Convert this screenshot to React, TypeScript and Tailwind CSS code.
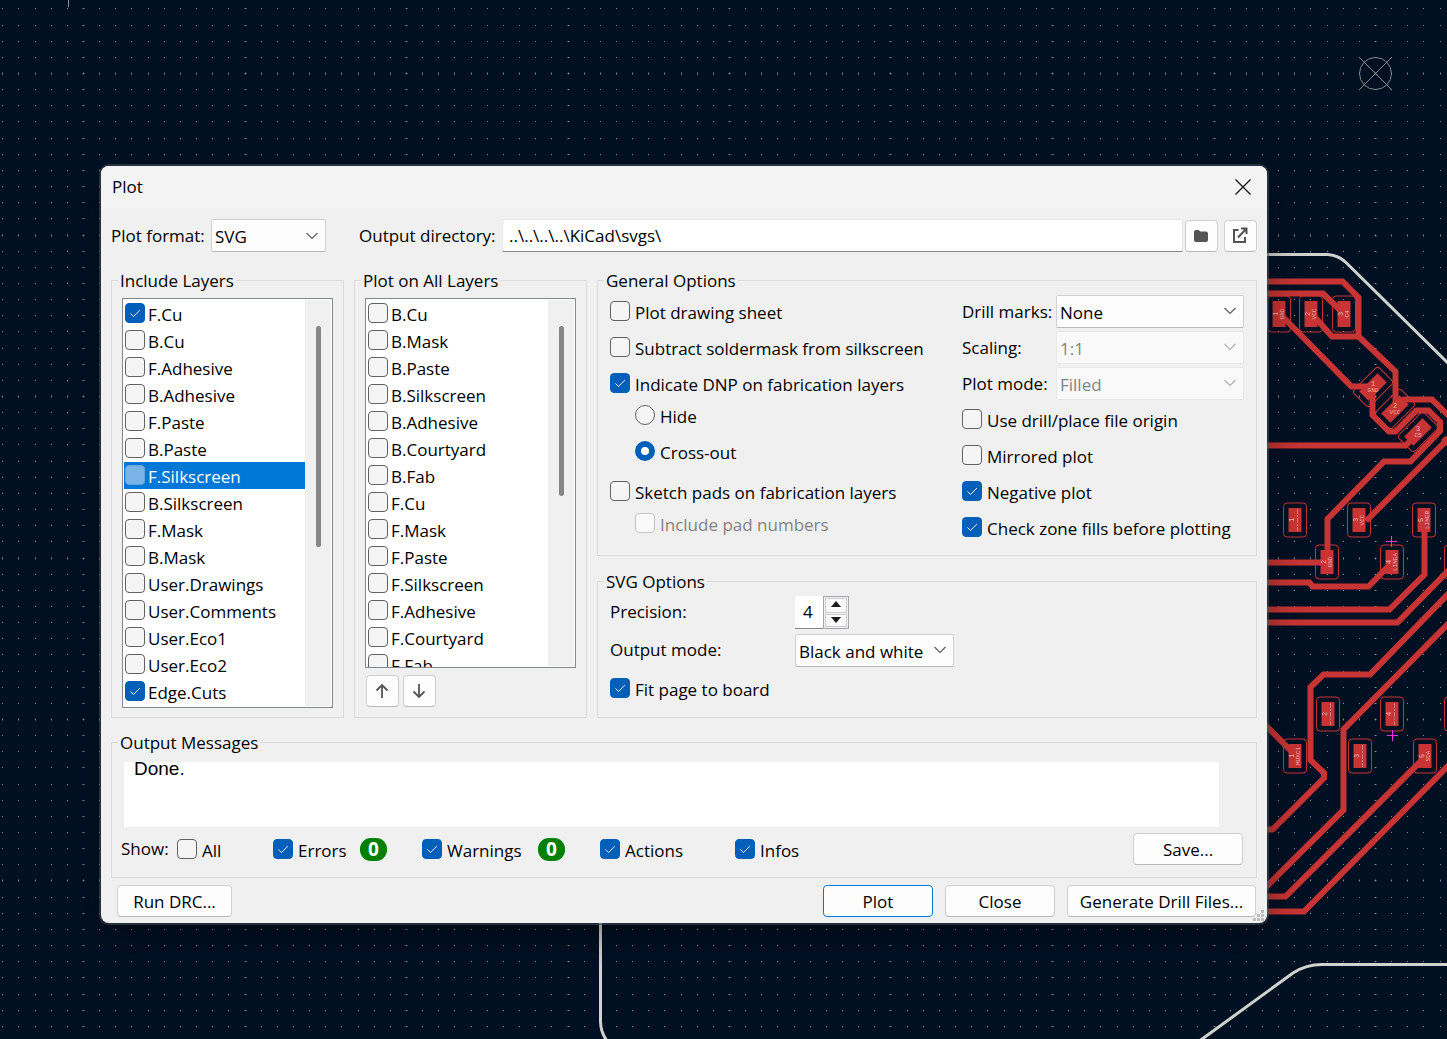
import { useState, type ReactNode } from "react";

/* ---------- board canvas ---------- */

const STEP = 16.15;

function buildGrid(width: number, height: number) {
  let minor = "";
  let major = "";
  for (let j = -5; 73 + j * STEP < height; j++) {
    const y = Math.round(73 + j * STEP);
    for (let i = -6; 83 + i * STEP < width; i++) {
      const x = Math.round(83 + i * STEP);
      minor += `M${x} ${y}h1v1h-1z`;
      if (i % 10 === 0) major += `M${x - 1} ${y}h3v1h-3z`;
      if (j % 10 === 0) major += `M${x} ${y - 1}h1v3h-1z`;
    }
  }
  return { minor, major };
}

const grid = buildGrid(1920, 1200);

const tracks = [
  "M1260 281.5H1342.5L1358.5 297.5V336.5L1395.5 371.5V404",
  "M1260 293.5H1323L1343 313",
  "M1312 314L1332 336.5H1360",
  "M1280 314L1351.5 386.5H1370",
  "M1372.5 388V415L1389 431.5H1395.5L1416.5 410.5H1428.5L1440 422V431L1410.5 461.5H1384L1327.5 519V562",
  "M1396 408L1404 399.5H1432L1450 417",
  "M1260 445.5H1405.5L1418 433",
  "M1450 437L1366 521",
  "M1443 438L1450 445",
  "M1260 562.5H1327",
  "M1260 582.5H1309.5L1312.5 586.5H1368.5L1391.5 563",
  "M1260 609.5H1389.5L1424.5 574.5V521",
  "M1260 622.5H1397.5L1450 569",
  "M1450 592L1370 674.5H1323.5L1310.5 687V760L1324 773V778L1272.5 829.5H1260",
  "M1450 622L1343.5 729.5V810L1260 893",
  "M1260 719.5L1295 755",
  "M1260 896.5H1285.5L1424 758",
  "M1260 911.5H1304L1450 764",
];

type Pad = { x: number; y: number; h: number; n?: string; net?: string; tilt?: boolean };

const pads: Pad[] = [
  { x: 1279, y: 314, h: 26, n: "1", net: "GND" },
  { x: 1311, y: 314, h: 26, n: "2", net: "VCC" },
  { x: 1344, y: 314, h: 26, n: "3", net: "C4" },
  { x: 1373, y: 387, h: 26, n: "1", net: "GND", tilt: true },
  { x: 1395, y: 409, h: 26, n: "2", net: "VCC", tilt: true },
  { x: 1418, y: 432, h: 26, n: "3", net: "C5", tilt: true },
  { x: 1295, y: 520, h: 24, n: "1" },
  { x: 1359, y: 520, h: 24, n: "3", net: "VCC" },
  { x: 1424, y: 520, h: 24, n: "5", net: "LINEB" },
  { x: 1327, y: 562, h: 24, n: "2", net: "GND" },
  { x: 1392, y: 562, h: 24, n: "4", net: "LINEA" },
  { x: 1456, y: 562, h: 24 },
  { x: 1328, y: 714, h: 24, n: "2" },
  { x: 1392, y: 714, h: 24, n: "4" },
  { x: 1456, y: 714, h: 24 },
  { x: 1295, y: 756, h: 24, n: "1", net: "MUXC1" },
  { x: 1360, y: 756, h: 24, n: "3" },
  { x: 1425, y: 756, h: 24, n: "5", net: "SDA" },
];

function PadShape({ x, y, h, n, net, tilt }: Pad) {
  const oh = h + 10;
  return (
    <g transform={`translate(${x} ${y})`}>
      <g transform={tilt ? "rotate(45)" : undefined}>
        <rect x={-6.5} y={-h / 2} width={13} height={h} fill="#c83434" />
        <rect x={-11.5} y={-oh / 2} width={23} height={oh} rx={3.5} fill="none" stroke="#c83434" strokeWidth={1} />
      </g>
      {n && (
        <g
          transform={tilt ? undefined : "rotate(-90)"}
          fill="#ecb4b4"
          textAnchor="middle"
          fontFamily="'Liberation Mono', monospace"
        >
          <text y={-1} fontSize={7}>{n}</text>
          {net && <text y={5} fontSize={6}>{net}</text>}
        </g>
      )}
      {n && !net && <path d="M2.5 -11V11" stroke="#e6a3a3" strokeWidth={1} strokeDasharray="5 1 2 1" opacity={0.6} />}
    </g>
  );
}

function Board() {
  return (
    <svg className="absolute inset-0 h-full w-full" aria-hidden="true">
      <path d={grid.minor} fill="#878c8c" shapeRendering="crispEdges" />
      <path d={grid.major} fill="#878c8c" opacity={0.45} shapeRendering="crispEdges" />
      <path d="M68.500 0V7" stroke="#8d9296" />
      <g stroke="#84888c" fill="none">
        <circle cx={1375.5} cy={73.5} r={16} />
        <path d="M1359 57L1392 90M1392 57L1359 90" />
      </g>
      <g fill="none" stroke="#c83434" strokeWidth={6}>
        {tracks.map((d) => (
          <path key={d} d={d} />
        ))}
      </g>
      {pads.map((p) => (
        <PadShape key={`${p.x}-${p.y}`} {...p} />
      ))}
      <g fill="none" stroke="#d0d2cd" strokeWidth={3}>
        <path d="M1260 254.500H1328Q1338 255 1346 262.500L1450 365" />
        <path d="M600.500 915V1022Q601 1034 608 1042" />
        <path d="M1198 1042L1293 973Q1306 964.500 1322 964.500H1450" />
      </g>
      <path d="M1386 541.500H1397M1391.500 536V547M1387 735.500H1398M1392.500 730V741" stroke="#f032e6" />
    </svg>
  );
}

/* ---------- controls ---------- */

const boxStyle =
  "col-start-1 row-start-1 size-5 appearance-none rounded-[4px] border border-[#626262] bg-[#f5f5f5] checked:border-[#005fb8] checked:bg-[#005fb8] disabled:border-[#c4c4c4] disabled:bg-[#fafafa]";

function TickBox({ checked = false, disabled }: { checked?: boolean; disabled?: boolean }) {
  const [on, setOn] = useState(checked);
  return (
    <span className="grid shrink-0">
      <input type="checkbox" checked={on} disabled={disabled} onChange={() => setOn(!on)} className={boxStyle} />
      {on && (
        <svg viewBox="0 0 20 20" className="pointer-events-none col-start-1 row-start-1 size-5" fill="none" stroke="#fff">
          <path d="M5.500 10.500L8.500 13.500L15 7" />
        </svg>
      )}
    </span>
  );
}

type CheckProps = { label: string; checked?: boolean; disabled?: boolean; className?: string };

function Check({ label, checked, disabled, className = "" }: CheckProps) {
  return (
    <label className={`flex items-center gap-[5px] ${disabled ? "text-[#838383]" : ""} ${className}`}>
      <TickBox checked={checked} disabled={disabled} />
      <span className="whitespace-nowrap pt-[3px]">{label}</span>
    </label>
  );
}

function Radio({ label, checked, className = "" }: { label: string; checked?: boolean; className?: string }) {
  return (
    <label className={`flex items-center gap-[5px] ${className}`}>
      <input
        type="radio"
        name="dnp"
        defaultChecked={checked}
        className="size-5 appearance-none rounded-full border border-[#626262] bg-[#f5f5f5] checked:border-[6px] checked:border-[#005fb8] checked:bg-white"
      />
      <span className="pt-[3px]">{label}</span>
    </label>
  );
}

function Select({ id, value, disabled, className }: { id: string; value: string; disabled?: boolean; className: string }) {
  return (
    <span className={`grid ${className}`}>
      <select
        id={id}
        disabled={disabled}
        className="col-start-1 row-start-1 h-[33px] w-full appearance-none rounded-[2px] border border-[#d0d0d0] border-b-[#b8b8b8] bg-[#fdfdfd] pt-[3px] pl-[3px] disabled:border-[#e8e8e8] disabled:bg-[#f9f9f9] disabled:text-[#838383] disabled:opacity-100"
      >
        <option>{value}</option>
      </select>
      <svg
        viewBox="0 0 12 8"
        className={`pointer-events-none col-start-1 row-start-1 mr-2 h-2 w-3 self-center justify-self-end ${disabled ? "text-[#b4b4b4]" : "text-[#5e5e5e]"}`}
        fill="none"
        stroke="currentColor"
        strokeWidth={1.2}
      >
        <path d="M0.500 1L6 6.500L11.500 1" />
      </svg>
    </span>
  );
}

const buttonBase = "h-8 rounded-[4px] border bg-[#fdfdfd] whitespace-nowrap";

function Button({ children, primary, className = "" }: { children: ReactNode; primary?: boolean; className?: string }) {
  return (
    <button
      type="button"
      className={`${buttonBase} pt-px ${primary ? "border-[#0078d4]" : "border-[#d0d0d0] border-b-[#b9b9b9]"} ${className}`}
    >
      {children}
    </button>
  );
}

function IconButton({ label, children }: { label: string; children: ReactNode }) {
  return (
    <button
      type="button"
      aria-label={label}
      className={`${buttonBase} grid w-[33px] shrink-0 place-items-center border-[#d0d0d0] border-b-[#b9b9b9] pr-px text-[#545454]`}
    >
      {children}
    </button>
  );
}

function Group({ title, children, className = "" }: { title: string; children: ReactNode; className?: string }) {
  return (
    <fieldset className={`min-w-0 border border-[#dcdcdc] ${className}`}>
      <legend className="ml-[6px] h-6 px-[2px] leading-[26px]">{title}</legend>
      {children}
    </fieldset>
  );
}

type Layer = { name: string; on?: boolean; selected?: boolean };

function LayerList({ layers, height, thumb }: { layers: Layer[]; height: string; thumb: string }) {
  return (
    <div className={`flex overflow-hidden border border-[#828790] bg-white p-px ${height}`}>
      <ul className="min-w-0 flex-1">
        {layers.map((l) => (
          <li key={l.name} className={`h-[27px] pl-px ${l.selected ? "bg-[#0078d7] text-white" : ""}`}>
            <label className="flex items-start gap-[3px] pt-[3px]">
              {l.selected ? (
                <input
                  type="checkbox"
                  className="size-5 shrink-0 appearance-none rounded-[4px] border border-[#66a5dd] bg-[#7ab4e6]"
                />
              ) : (
                <TickBox checked={l.on} />
              )}
              <span className="leading-[23px]">{l.name}</span>
            </label>
          </li>
        ))}
      </ul>
      <div className="flex w-[26px] justify-center bg-[#f0f0f0] pt-[26px]">
        <div className={`w-[5px] rounded-full bg-[#868686] ${thumb}`} />
      </div>
    </div>
  );
}

const includeLayers: Layer[] = [
  { name: "F.Cu", on: true },
  { name: "B.Cu" },
  { name: "F.Adhesive" },
  { name: "B.Adhesive" },
  { name: "F.Paste" },
  { name: "B.Paste" },
  { name: "F.Silkscreen", selected: true },
  { name: "B.Silkscreen" },
  { name: "F.Mask" },
  { name: "B.Mask" },
  { name: "User.Drawings" },
  { name: "User.Comments" },
  { name: "User.Eco1" },
  { name: "User.Eco2" },
  { name: "Edge.Cuts", on: true },
];

const allLayers: Layer[] = [
  "B.Cu",
  "B.Mask",
  "B.Paste",
  "B.Silkscreen",
  "B.Adhesive",
  "B.Courtyard",
  "B.Fab",
  "F.Cu",
  "F.Mask",
  "F.Paste",
  "F.Silkscreen",
  "F.Adhesive",
  "F.Courtyard",
  "F.Fab",
].map((name) => ({ name }));

function Count() {
  return (
    <span className="grid h-[23px] w-[27px] place-items-center rounded-[11px] bg-[#008000] text-[19px] leading-[23px] font-bold text-white">
      0
    </span>
  );
}

/* ---------- dialog ---------- */

export default function App() {
  return (
    <main className="relative min-h-screen overflow-hidden bg-[#001023] pt-[166px] pr-[180px] pl-[101px] font-['Open_Sans',sans-serif] text-[17px] leading-6 text-black">
      <Board />
      <section
        role="dialog"
        aria-labelledby="dialog-title"
        className="relative overflow-hidden rounded-[8px] bg-[#f0f0f0] shadow-[0_0_0_2px_rgba(70,80,90,0.55),0_12px_36px_rgba(0,0,0,0.4)]"
      >
        <header className="flex h-[43px] items-center justify-between bg-[#f3f3f3] pr-4 pb-[2px] pl-[11px]">
          <h1 id="dialog-title">Plot</h1>
          <button type="button" aria-label="Close window">
            <svg viewBox="0 0 16 16" className="size-4" fill="none" stroke="#1a1a1a" strokeWidth={1.4}>
              <path d="M0.500 0.500L15.500 15.500M15.500 0.500L0.500 15.500" />
            </svg>
          </button>
        </header>

        <div className="px-[10px] pt-[10px] pb-[6px]">
          <div className="flex h-[33px] items-center">
            <label htmlFor="format" className="w-[100px] whitespace-nowrap">Plot format:</label>
            <Select id="format" value="SVG" className="w-[115px]" />
            <label htmlFor="dir" className="ml-[33px] w-[143px] whitespace-nowrap">Output directory:</label>
            <input
              id="dir"
              defaultValue="..\..\..\..\KiCad\svgs\"
              className="mr-[2px] h-[33px] min-w-0 flex-1 border border-[#e6e6e6] border-b-[#868686] bg-white px-[6px]"
            />
            <IconButton label="Browse">
              <svg viewBox="0 0 16 14" className="h-3.5 w-4" fill="currentColor">
                <path d="M1 3Q1 1 3 1H5.500L7.500 2.500H13Q15 2.500 15 4.500V11Q15 13 13 13H3Q1 13 1 11Z" />
              </svg>
            </IconButton>
            <span className="w-[6px]" />
            <IconButton label="Open output directory">
              <svg viewBox="0 0 16 16" className="mb-[2px] size-4" fill="none" stroke="currentColor" strokeWidth={2}>
                <path d="M6.500 3H2V15H13V10M9 1.500H14.500V7M14.500 1.500L6 10.500" />
              </svg>
            </IconButton>
          </div>

          <div className="mt-4 flex gap-[10px]">
            <Group title="Include Layers" className="w-[233px]">
              <div className="px-[10px] pt-[6px] pb-[9px]">
                <LayerList layers={includeLayers} height="h-[410px]" thumb="h-[221px]" />
              </div>
            </Group>

            <Group title="Plot on All Layers" className="w-[233px]">
              <div className="px-[10px] pt-[6px]">
                <LayerList layers={allLayers} height="h-[370px]" thumb="h-[170px]" />
                <div className="mt-[7px] flex gap-1 pl-px">
                  <IconButton label="Move up">
                    <svg viewBox="0 0 16 16" className="size-4" fill="none" stroke="currentColor" strokeWidth={1.8}>
                      <path d="M8 15V2M2.500 7.500L8 2L13.500 7.500" />
                    </svg>
                  </IconButton>
                  <IconButton label="Move down">
                    <svg viewBox="0 0 16 16" className="size-4" fill="none" stroke="currentColor" strokeWidth={1.8}>
                      <path d="M8 1V14M2.500 8.500L8 14L13.500 8.500" />
                    </svg>
                  </IconButton>
                </div>
              </div>
            </Group>

            <div className="flex min-w-0 flex-1 flex-col justify-between">
              <Group title="General Options">
                <div className="grid grid-cols-[1fr_282px] px-3 pt-px pb-[10px]">
                  <div>
                    <Check label="Plot drawing sheet" className="h-9" />
                    <Check label="Subtract soldermask from silkscreen" className="h-9" />
                    <Check label="Indicate DNP on fabrication layers" checked className="h-9" />
                    <Radio label="Hide" className="ml-[25px] h-7" />
                    <Radio label="Cross-out" checked className="mt-1 ml-[25px] h-9" />
                    <Check label="Sketch pads on fabrication layers" className="mt-1 h-9" />
                    <Check label="Include pad numbers" disabled className="ml-[25px] h-7" />
                  </div>
                  <div>
                    <div className="flex h-9 items-center">
                      <label htmlFor="drill" className="w-[94px] pt-px whitespace-nowrap">Drill marks:</label>
                      <Select id="drill" value="None" className="w-[188px]" />
                    </div>
                    <div className="flex h-9 items-center">
                      <label htmlFor="scaling" className="w-[94px] pt-px">Scaling:</label>
                      <Select id="scaling" value="1:1" disabled className="w-[188px]" />
                    </div>
                    <div className="flex h-9 items-center">
                      <label htmlFor="mode" className="w-[94px] pt-px whitespace-nowrap">Plot mode:</label>
                      <Select id="mode" value="Filled" disabled className="w-[188px]" />
                    </div>
                    <Check label="Use drill/place file origin" className="h-9" />
                    <Check label="Mirrored plot" className="h-9" />
                    <Check label="Negative plot" checked className="h-9" />
                    <Check label="Check zone fills before plotting" checked className="h-9" />
                  </div>
                </div>
              </Group>

              <Group title="SVG Options">
                <div className="px-3 pb-[10px]">
                  <div className="flex h-[38px] items-center">
                    <label htmlFor="precision" className="w-[185px]">Precision:</label>
                    <span className="flex h-[33px]">
                      <input id="precision" defaultValue="4" className="w-7 border-b border-[#868686] bg-white pl-2" />
                      <span className="flex w-[26px] flex-col gap-px border border-[#a5a7ac] bg-[#f0f0f0] p-px">
                        <button type="button" aria-label="Increase" className="grid flex-1 place-items-center border border-[#cfcfcf] bg-[#fafafa] pb-[2px]">
                          <svg viewBox="0 0 10 6" className="h-1.5 w-2.5" fill="#1a1a1a"><path d="M0 6L5 0L10 6Z" /></svg>
                        </button>
                        <button type="button" aria-label="Decrease" className="grid flex-1 place-items-center border border-[#cfcfcf] bg-[#fafafa]">
                          <svg viewBox="0 0 10 6" className="h-1.5 w-2.5" fill="#1a1a1a"><path d="M0 0L5 6L10 0Z" /></svg>
                        </button>
                      </span>
                    </span>
                  </div>
                  <div className="flex h-[38px] items-center">
                    <label htmlFor="outmode" className="w-[185px]">Output mode:</label>
                    <Select id="outmode" value="Black and white" className="w-[159px]" />
                  </div>
                  <Check label="Fit page to board" checked className="h-[38px]" />
                </div>
              </Group>
            </div>
          </div>

          <Group title="Output Messages" className="mt-3">
            <textarea
              readOnly
              aria-label="Output messages"
              defaultValue="Done."
              className="mt-2 ml-3 block h-[65px] w-[calc(100%-49px)] resize-none bg-white pl-[10px] font-['Liberation_Sans',sans-serif] text-[19px] leading-[14px]"
            />
            <div className="mt-[6px] mb-3 flex h-8 items-center pr-[13px] pl-[9px]">
              <span className="w-14">Show:</span>
              <Check label="All" className="w-24" />
              <Check label="Errors" checked className="w-[87px]" />
              <Count />
              <Check label="Warnings" checked className="ml-[35px] w-[116px]" />
              <Count />
              <Check label="Actions" checked className="ml-[35px] w-[135px]" />
              <Check label="Infos" checked />
              <Button className="ml-auto w-[110px]">Save...</Button>
            </div>
          </Group>

          <footer className="mt-[7px] flex gap-3 pr-px pl-[6px]">
            <Button className="mr-auto w-[115px]">Run DRC...</Button>
            <Button primary className="w-[110px]">Plot</Button>
            <Button className="w-[110px]">Close</Button>
            <Button className="w-[189px]">Generate Drill Files...</Button>
          </footer>
        </div>

        <svg viewBox="0 0 11 11" className="absolute right-[3px] bottom-[2px] size-[11px]" fill="#bfbfbf" aria-hidden="true">
          <path d="M8 0h3v3h-3zM4 4h3v3h-3zM8 4h3v3h-3zM0 8h3v3h-3zM4 8h3v3h-3zM8 8h3v3h-3z" />
        </svg>
      </section>
    </main>
  );
}
